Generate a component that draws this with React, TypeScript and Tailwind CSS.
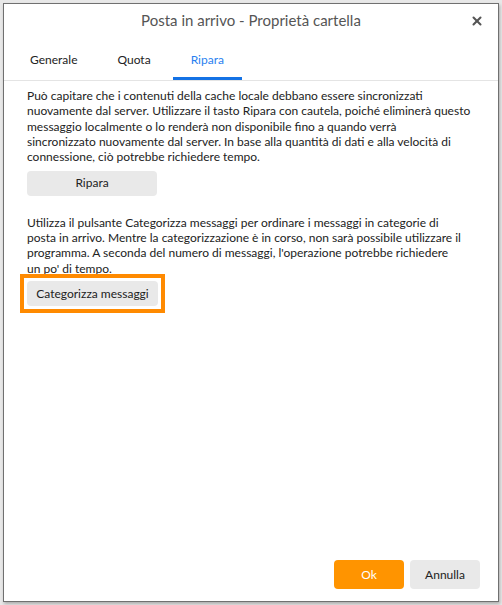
import { X } from "lucide-react";

const tabs = [
  { label: "Generale", active: false },
  { label: "Quota", active: false },
  { label: "Ripara", active: true },
];

export default function App() {
  return (
    <div
      className="h-[605px] w-[502px] bg-[#e8e8e8] p-[3px] text-[12px] leading-[15.33px] text-[#222]"
      style={{ fontFamily: 'Lato, "Noto Sans", sans-serif' }}
    >
      <div className="flex h-full flex-col border border-[#707070] bg-white shadow-[1px_2px_3px_rgba(0,0,0,0.25)]">
        {/* Title bar */}
        <div className="relative flex h-[34px] items-center justify-center">
          <h1 className="text-[15px] text-[#555]">Posta in arrivo - Proprietà cartella</h1>
          <button className="absolute right-[14px] top-[10px] text-[#555]">
            <X size={14} strokeWidth={3.5} />
          </button>
        </div>

        {/* Tabs */}
        <div className="mt-[9px] flex gap-[4px] border-b border-[#e4e4e4] pl-[8px]">
          {tabs.map((tab) => (
            <div
              key={tab.label}
              className={`flex h-[33px] items-center border-b-[3px] px-[18px] pb-[4px] ${
                tab.active ? "border-[#1472e5] text-[#2a7ff0]" : "border-transparent text-[#222]"
              }`}
            >
              {tab.label}
            </div>
          ))}
        </div>

        {/* Content */}
        <div className="flex-1 pl-[23px] pr-[22px] pt-[7px]">
          <p>
            Può capitare che i contenuti della cache locale debbano essere sincronizzati
            <br />
            nuovamente dal server. Utilizzare il tasto Ripara con cautela, poiché eliminerà questo
            <br />
            messaggio localmente o lo renderà non disponibile fino a quando verrà
            <br />
            sincronizzato nuovamente dal server. In base alla quantità di dati e alla velocità di
            <br />
            connessione, ciò potrebbe richiedere tempo.
          </p>
          <button className="mt-[6px] h-[25px] w-[130px] rounded-[4px] bg-[#e9e9e9]">Ripara</button>

          <p className="mt-[19px]">
            Utilizza il pulsante Categorizza messaggi per ordinare i messaggi in categorie di
            <br />
            posta in arrivo. Mentre la categorizzazione è in corso, non sarà possibile utilizzare il
            <br />
            programma. A seconda del numero di messaggi, l'operazione potrebbe richiedere
            <br />
            un po' di tempo.
          </p>
          <div className="-mt-[2px] ml-[-7px] inline-block border-[4px] border-[#ff8a00] p-[3px]">
            <button className="block h-[25px] w-[131px] whitespace-nowrap rounded-[4px] bg-[#e9e9e9]">
              Categorizza messaggi
            </button>
          </div>
        </div>

        {/* Footer */}
        <div className="flex justify-end gap-[6px] pb-[12px] pr-[18px]">
          <button className="h-[29px] w-[70px] rounded-[4px] bg-[#ff9400] text-white">Ok</button>
          <button className="h-[29px] w-[70px] rounded-[4px] bg-[#e9e9e9]">Annulla</button>
        </div>
      </div>
    </div>
  );
}
